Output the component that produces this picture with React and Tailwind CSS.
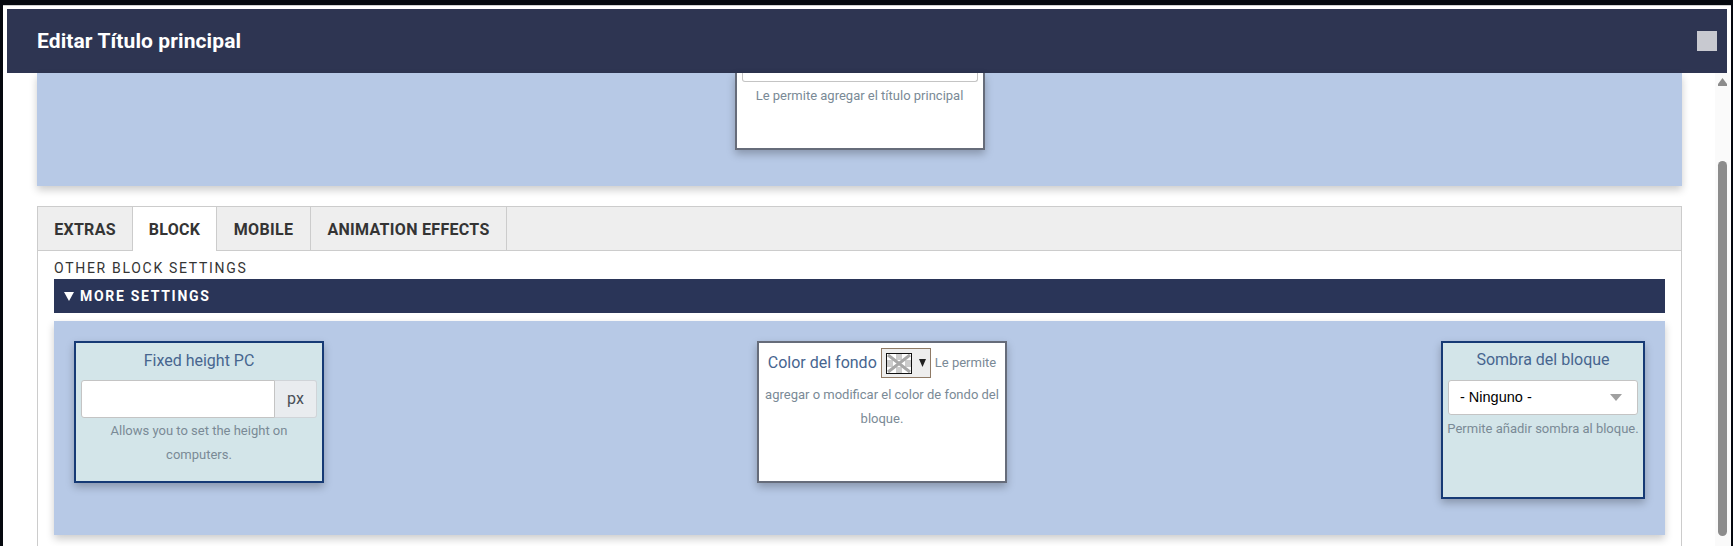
import { useState } from "react";

const font = "font-['Roboto',sans-serif]";

function Swatch() {
  return (
    <svg width="26" height="21" viewBox="0 0 26 21" className="block shrink-0">
      <rect x="0.5" y="0.5" width="25" height="20" fill="#ffffff" stroke="#111111" />
      <rect x="1" y="7" width="6" height="7" fill="#cccccc" />
      <rect x="19" y="7" width="6" height="7" fill="#cccccc" />
      <rect x="10" y="1" width="6" height="6" fill="#cccccc" />
      <rect x="10" y="14" width="6" height="6" fill="#cccccc" />
      <path d="M2 2 L24 19 M24 2 L2 19" stroke="#a8a8a8" strokeWidth="3" />
    </svg>
  );
}

function Card({ light, height, children }) {
  return (
    <div
      className={`w-full px-[5px] border-2 shadow-[0_4px_8px_rgba(0,0,0,0.25)] text-center ${height} ${
        light ? "bg-white border-[#666c7a]" : "bg-[#d3e5e9] border-[#163a75]"
      }`}
    >
      {children}
    </div>
  );
}

export default function App() {
  const [height, setHeight] = useState("");

  return (
    <div className={`h-[546px] overflow-hidden bg-[#05080f] pt-[5px] pl-[3px] pr-[2px] ${font}`}>
      <div className="h-[541px] bg-white border-t border-[#d0d0d0] overflow-hidden">
        {/* HEADER */}
        <div className="mx-[4px] mt-[3px] h-[64px] bg-[#2e3552] flex items-center justify-between pl-[30px] pr-[10px]">
          <h1 className="pt-[1px] text-white text-[21px] tracking-[0.1px] font-bold">Editar Título principal</h1>
          <button className="w-[20px] h-[20px] bg-[#c8c9d0]" />
        </div>

        <div className="flex">
          {/* CONTENT */}
          <div className="w-[1712px] pl-[34px] pr-[33px]">
            {/* top panel, scrolled under the header */}
            <div className="h-[113px] bg-[#b7c9e6] shadow-[0_4px_8px_rgba(0,0,0,0.2)] flex justify-center">
              <div className="w-[250px] h-[77px] bg-white border-x-2 border-b-2 border-[#666c7a] shadow-[0_4px_8px_rgba(0,0,0,0.25)] px-[5px] text-center">
                <div className="h-[9px] border-x border-b border-[#c4c4c4] rounded-b-[3px]" />
                <p className="mt-[4px] text-[13px] leading-[20px] whitespace-nowrap text-[#7a8a96]">
                  Le permite agregar el título principal
                </p>
              </div>
            </div>

            {/* TABS */}
            <div className="mt-[20px] h-[400px] border border-[#cccccc]">
              <div className="flex h-[44px] bg-[#eeeeee] border-b border-[#cccccc] text-[16px] tracking-[0.3px] font-bold text-[#343434]">
                <div className="w-[95px] pt-[2px] flex items-center justify-center border-r border-[#cccccc]">EXTRAS</div>
                <div className="w-[84px] h-[44px] pt-[2px] flex items-center justify-center border-r border-[#cccccc] bg-white">BLOCK</div>
                <div className="w-[94px] pt-[2px] flex items-center justify-center border-r border-[#cccccc]">MOBILE</div>
                <div className="w-[196px] pt-[2px] flex items-center justify-center border-r border-[#cccccc]">ANIMATION EFFECTS</div>
              </div>

              <div className="px-[16px]">
                <p className="h-[28px] pt-[7px] text-[14px] leading-[20px] tracking-[1.7px] text-[#343434]">
                  OTHER BLOCK SETTINGS
                </p>
                <div className="h-[34px] bg-[#2a3558] flex items-center pl-[10px] pt-[1px] text-white text-[14px] font-bold tracking-[1.7px]">
                  <svg width="10" height="9" viewBox="0 0 10 9" className="mr-[6px]">
                    <path d="M0 0 H10 L5 9 Z" fill="#ffffff" />
                  </svg>
                  MORE SETTINGS
                </div>

                {/* SETTINGS CARDS */}
                <div className="mt-[8px] h-[214px] bg-[#b7c9e6] shadow-[0_4px_8px_rgba(0,0,0,0.2)] pt-[20px] px-[20px] flex justify-between items-start">
                  <div className="w-[250px]">
                    <Card height="h-[142px]">
                      <div className="pt-[6px] text-[16px] leading-[24px] text-[#47658f]">Fixed height PC</div>
                      <div className="mt-[7px] flex h-[38px]">
                        <input
                          value={height}
                          onChange={(e) => setHeight(e.target.value)}
                          className="w-[194px] bg-white border border-[#c4c4c4] rounded-l-[3px] outline-none"
                        />
                        <div className="flex-1 flex items-center justify-center bg-[#e9ecef] border border-l-0 border-[#d0d4d8] rounded-r-[3px] text-[16px] text-[#495057]">
                          px
                        </div>
                      </div>
                      <p className="mt-[1px] text-[13px] leading-[24px] text-[#7a8a96]">
                        Allows you to set the height on computers.
                      </p>
                    </Card>
                  </div>

                  <div className="w-[250px] mr-[1px]">
                    <Card light height="h-[142px]">
                      <div className="pt-[5px] text-[13px] leading-[24px] text-[#7a8a96]">
                        <div className="flex items-center justify-center h-[30px] whitespace-nowrap">
                          <span className="text-[16px] text-[#47658f]">Color del fondo</span>
                          <span className="mx-[4px] w-[50px] h-[30px] shrink-0 flex items-center pl-[4px] bg-[#eeeeee] border border-[#8f7a65]">
                            <Swatch />
                            <svg width="7" height="8" viewBox="0 0 7 8" className="ml-[7px]">
                              <path d="M0 0 H7 L3.5 8 Z" fill="#222222" />
                            </svg>
                          </span>
                          <span>Le permite</span>
                        </div>
                        <p className="mt-[5px]">agregar o modificar el color de fondo del bloque.</p>
                      </div>
                    </Card>
                  </div>

                  <div className="w-[204px]">
                    <Card height="h-[158px]">
                      <div className="pt-[5px] text-[16px] leading-[24px] text-[#47658f]">Sombra del bloque</div>
                      <div className="mt-[8px] h-[35px] bg-white border border-[#c4c4c4] rounded-[3px] flex items-center justify-between pl-[11px] pr-[15px] text-[14.5px] text-black font-['Liberation_Sans',sans-serif]">
                        <span>- Ninguno -</span>
                        <span className="w-0 h-0 border-x-[6px] border-x-transparent border-t-[7px] border-t-[#a0a0a0]" />
                      </div>
                      <p className="mt-[2px] -mx-[5px] text-[13px] leading-[24px] whitespace-nowrap text-[#7a8a96]">
                        Permite añadir sombra al bloque.
                      </p>
                    </Card>
                  </div>
                </div>
              </div>
            </div>
          </div>

          {/* SCROLLBAR */}
          <div className="w-[15px] h-[480px] bg-[#fafafa] pl-[3px] flex flex-col">
            <svg width="9" height="8" viewBox="0 0 9 8" className="mt-[5px] shrink-0">
              <path d="M4.5 0 L9 6 V8 H0 V6 Z" fill="#8c8c8c" />
            </svg>
            <div className="mt-[75px] w-[9px] h-[375px] rounded-[5px] bg-[#8c8c8c]" />
          </div>
        </div>
      </div>
    </div>
  );
}
